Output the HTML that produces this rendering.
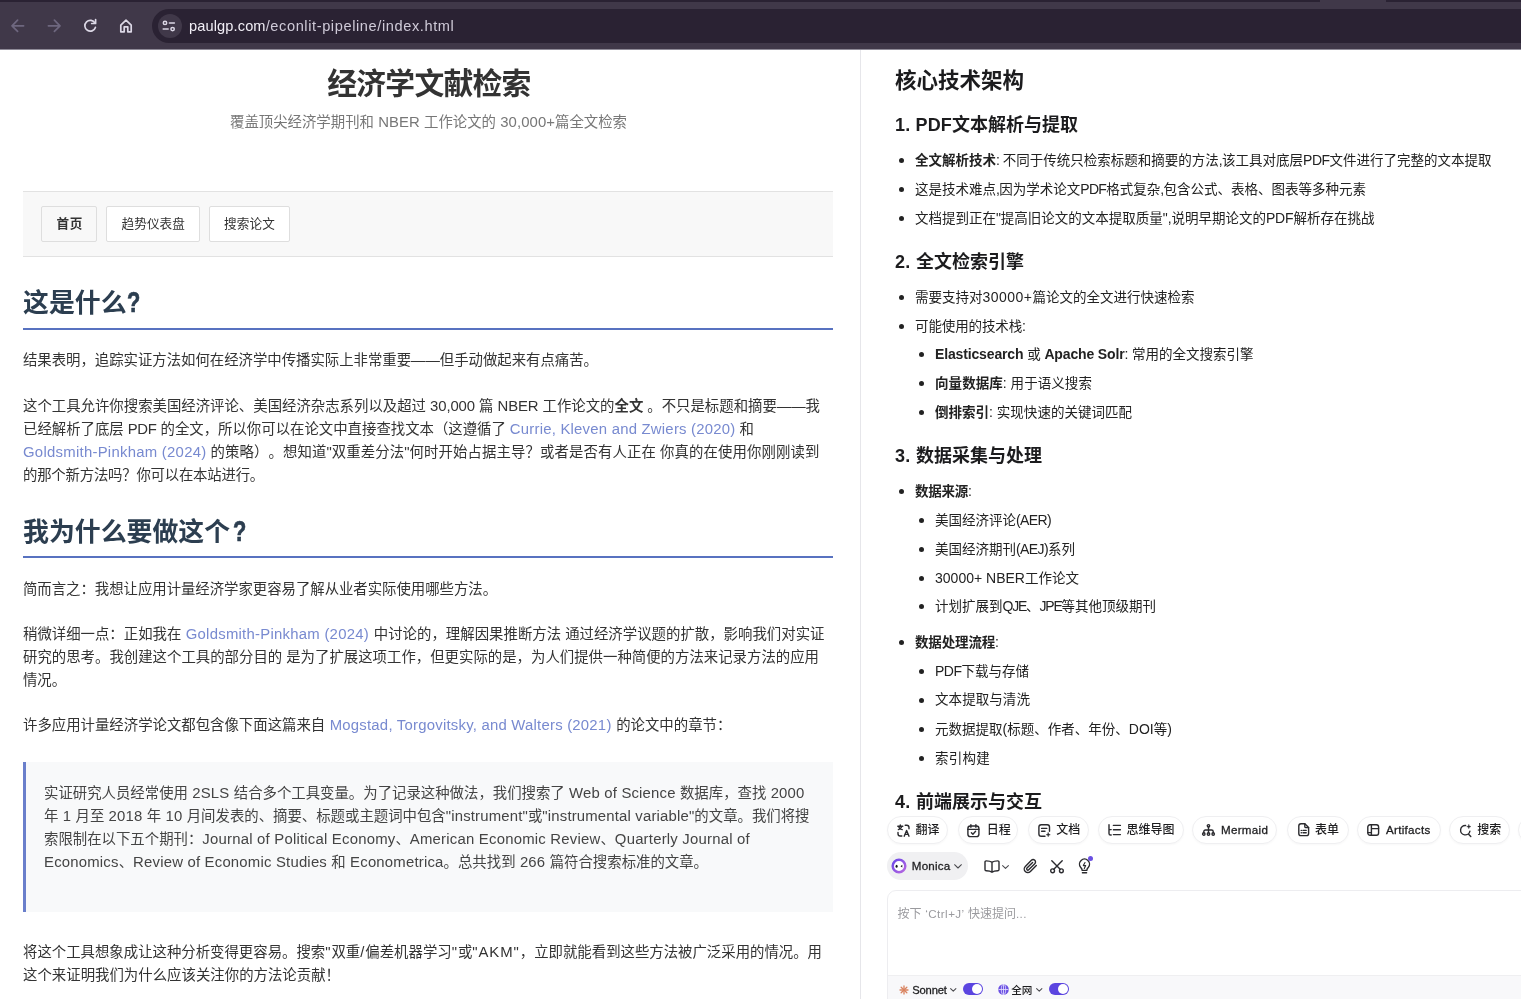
<!DOCTYPE html>
<html lang="zh-CN">
<head>
<meta charset="utf-8">
<title>经济学文献检索</title>
<style>
*{box-sizing:border-box;margin:0;padding:0}
html,body{width:1521px;height:999px;overflow:hidden;background:#fff}
body{position:relative;font-family:"Liberation Sans","Noto Sans CJK SC",sans-serif;text-spacing-trim:space-all;-webkit-font-smoothing:antialiased}
#root{position:absolute;left:0;top:0;width:1521px;height:999px;overflow:hidden;will-change:transform}
.abs{position:absolute}
/* browser chrome */
#chrome{position:absolute;left:0;top:0;width:1521px;height:50px;background:#403849;border-bottom:1px solid #8f8b98}
#tabstrip{position:absolute;left:0;top:0;width:1521px;height:2px;background:#2a2233}
#tabact{position:absolute;left:1320px;top:0;width:66px;height:3px;background:#403849;border-radius:0}
#urlbar{position:absolute;left:152px;top:9px;width:1400px;height:34px;border-radius:17px;background:#2a2233}
#urlic{position:absolute;left:158px;top:14px;width:24px;height:24px;border-radius:12px;background:#403849}
.url{position:absolute;left:189px;top:14.5px;height:22px;line-height:22px;font-size:14.6px;color:#f1eef6;white-space:nowrap;letter-spacing:.12px}
.url i{font-style:normal;color:#cfcad8;letter-spacing:.6px}
/* page */
#split{position:absolute;left:860px;top:50px;width:1px;height:949px;background:#e6e6ea}
#nav{position:absolute;left:23px;top:191px;width:810px;height:66px;background:#f8f8f8;border-top:1px solid #e2e2e2;border-bottom:1px solid #e2e2e2}
.btn{position:absolute;top:206px;height:36px;border:1px solid #dedede;background:#fff;border-radius:2px}
.hr{position:absolute;left:23px;width:810px;height:2px;background:#5872c0}
#bq{position:absolute;left:23px;top:762px;width:810px;height:150px;background:#f8f9fa;border-left:3px solid #6a7fcb}
.ln{position:absolute;white-space:pre;height:24px;line-height:24px;margin-top:-12px;font-size:14.4px;color:#333;--ls:0px}
.ln .l{letter-spacing:var(--ls)}
.ln a{color:#788ad0}
.ln b{font-weight:700}
.title{font-size:29.8px;font-weight:700;height:40px;line-height:40px;margin-top:-20px;color:#333}
.sub{color:#777}
.nb{font-size:12.6px;color:#333}
.nb.b{font-weight:700}
.h2{font-size:25.9px;font-weight:700;height:36px;line-height:36px;margin-top:-18px;color:#2c3e50}
.qm{transform:scaleX(.75);transform-origin:0 50%;font-size:29px;-webkit-text-stroke:.7px #2c3e50;margin-top:-18.2px}
.q{color:#444}
.r{font-size:13.5px;color:#222;margin-top:-12px}
.r .l{font-size:14px}
.p .l,.sub .l{font-size:14.9px}
.rh1{font-size:21.5px;font-weight:700;color:#1c1c1e;height:32px;line-height:32px;margin-top:-15px}
.rh3{font-size:18px;font-weight:700;color:#1c1c1e;height:28px;line-height:28px;margin-top:-13px}
.dot{position:absolute;width:5px;height:5px;border-radius:50%;background:#222;margin:-2.5px 0 0 -2.5px}
/* chips */
.chip{position:absolute;top:816px;height:28px;border:1px solid #efeff1;border-radius:14px;background:#fff;box-shadow:0 1px 2px rgba(0,0,0,.03)}
.ct{position:absolute;white-space:nowrap;font-size:12px;line-height:20px;height:20px;margin-top:-10px;color:#1e1e20;font-weight:500}
.ct .l{font-size:11.6px;-webkit-text-stroke:.3px #1e1e20}
.sm{font-size:10.6px}
.sm .l{font-size:11.2px}
.ph{color:#9a9a9e;font-weight:400}
.ct.ph .l{-webkit-text-stroke:0}

svg{position:absolute;overflow:visible}
.ic{fill:none;stroke:#2a2a2e;stroke-width:1.4;stroke-linecap:round;stroke-linejoin:round}
.ic.th{stroke:#4a4a4e;stroke-width:1.05}
#monica{position:absolute;left:887px;top:852px;width:81px;height:28px;border-radius:14px;background:#f0f0f2}
#inp{position:absolute;left:887px;top:890px;width:700px;height:140px;border:1px solid #ededf0;border-radius:9px;background:#fff;overflow:hidden}
#inpbar{position:absolute;left:0;top:84px;width:700px;height:60px;background:#f8f8fa;border-top:1px solid #efeff1}
.tog{position:absolute;top:983px;width:20px;height:12px;border-radius:6px;background:#5b45e0}
.tog:after{content:"";position:absolute;right:1px;top:1px;width:10px;height:10px;border-radius:5px;background:#fff}
</style>
</head>
<body>
<div id="root">
<div id="chrome">
  <div id="tabstrip"></div><div id="tabact"></div>
  <div id="urlbar"></div><div id="urlic"></div>
  <div class="url">paulgp.com<i>/econlit-pipeline/index.html</i></div>
  <svg style="left:0;top:0" width="200" height="49" viewBox="0 0 200 49">
<g fill="none" stroke="#6e677f" stroke-width="1.7" stroke-linecap="round" stroke-linejoin="round">
<path d="M23.6 25.8H12.2M17.6 20.2L12 25.8l5.6 5.6"/>
<path d="M48.4 25.8h11.4M54.4 20.2l5.6 5.6-5.6 5.6"/>
</g>
<g fill="none" stroke="#dcd8e6" stroke-width="1.7" stroke-linecap="round" stroke-linejoin="round">
<path d="M95 23.2A5.4 5.4 0 1 0 95.4 27.4"/>
<path d="M95.6 19.6v3.9h-3.9" />
<path d="M120.8 25.2L126 20.2l5.2 5v6.6h-3.4v-5h-3.6v5h-3.4z"/>
</g>
<g fill="none" stroke="#dcd8e6" stroke-width="1.5" stroke-linecap="round">
<circle cx="165" cy="22.9" r="1.7"/><path d="M169.4 22.9h5"/>
<circle cx="172.6" cy="29.1" r="1.7"/><path d="M163.2 29.1h5"/>
</g></svg>
</div>
<div id="split"></div>
<div id="nav"></div>
<div class="btn" style="left:41px;width:56px;background:#f8f8f8"></div>
<div class="btn" style="left:106px;width:94px"></div>
<div class="btn" style="left:209px;width:81px"></div>
<div class="hr" style="top:328px"></div>
<div class="hr" style="top:556px"></div>
<div id="bq"></div>
<div class="dot" style="left:901.7px;top:160.8px"></div>
<div class="dot" style="left:901.7px;top:189.8px"></div>
<div class="dot" style="left:901.7px;top:218.8px"></div>
<div class="dot" style="left:901.7px;top:297.8px"></div>
<div class="dot" style="left:901.7px;top:326.8px"></div>
<div class="dot" style="left:901.7px;top:491.8px"></div>
<div class="dot" style="left:901.7px;top:642.8px"></div>
<div class="dot" style="left:921.8px;top:354.8px"></div>
<div class="dot" style="left:921.8px;top:383.8px"></div>
<div class="dot" style="left:921.8px;top:412.8px"></div>
<div class="dot" style="left:921.8px;top:520.8px"></div>
<div class="dot" style="left:921.8px;top:549.8px"></div>
<div class="dot" style="left:921.8px;top:578.3px"></div>
<div class="dot" style="left:921.8px;top:606.8px"></div>
<div class="dot" style="left:921.8px;top:671.8px"></div>
<div class="dot" style="left:921.8px;top:700.8px"></div>
<div class="dot" style="left:921.8px;top:729.8px"></div>
<div class="dot" style="left:921.8px;top:758.3px"></div>
<div class="chip" style="left:886.5px;width:61.5px"></div>
<div class="chip" style="left:957.5px;width:60.5px"></div>
<div class="chip" style="left:1027.5px;width:61.5px"></div>
<div class="chip" style="left:1098px;width:85.5px"></div>
<div class="chip" style="left:1191.5px;width:85.5px"></div>
<div class="chip" style="left:1287px;width:61.5px"></div>
<div class="chip" style="left:1356.5px;width:84px"></div>
<div class="chip" style="left:1448.5px;width:61.5px"></div>
<div class="chip" style="left:1518px;width:82px"></div>
<svg class="ic" style="left:896.5px;top:823.5px" width="13" height="13" viewBox="0 0 13 13"><path d="M0.8 2.2h5M3.3 0.9v1.3M1.4 5.6c2-0.6 3.2-1.8 3.6-3.4M1.8 3c0.6 1.3 1.8 2.2 3.4 2.6"/><path d="M7.2 12.2l2.4-5.8 2.4 5.8M8 10.4h3.2"/><path d="M8.2 1.2h1.6a2.2 2.2 0 0 1 2.2 2.2v1.4"/><path d="M4.8 12h-1.6a2.2 2.2 0 0 1-2.2-2.2v-1.4"/></svg>
<svg class="ic" style="left:967px;top:823.5px" width="13" height="13.5" viewBox="0 0 13 13.5"><rect x="0.9" y="2" width="11" height="10.6" rx="2.4"/><path d="M0.9 5.4h11M3.9 0.7v2.6M8.9 0.7v2.6M4.4 8.7l1.5 1.5 2.7-2.9"/></svg>
<svg class="ic" style="left:1038px;top:823.5px" width="13" height="13" viewBox="0 0 13 13"><path d="M7 12.2H3.2A2.3 2.3 0 0 1 0.9 9.9V3.1A2.3 2.3 0 0 1 3.2 0.8h6A2.3 2.3 0 0 1 11.5 3.1V7.2"/><path d="M3.6 4.4h5.2M3.6 7.2h3.4"/><path d="M10.2 8.6l0.6 1.5 1.5 0.6-1.5 0.6-0.6 1.5-0.6-1.5-1.5-0.6 1.5-0.6z" fill="#2a2a2e" stroke-width="0.4"/></svg>
<svg class="ic" style="left:1108px;top:824px" width="13" height="12" viewBox="0 0 13 12"><path d="M1 0.8v8.6a1.6 1.6 0 0 0 1.6 1.6h0.6M1 5.6h2.2"/><path d="M5.4 1.4h7M5.4 5.8h7M5.4 10.6h7"/></svg>
<svg class="ic" style="left:1201.5px;top:824px" width="13" height="12" viewBox="0 0 13 12"><circle cx="6.5" cy="1.8" r="1.2"/><circle cx="1.8" cy="10" r="1.2"/><circle cx="6.5" cy="10" r="1.2"/><circle cx="11.2" cy="10" r="1.2"/><path d="M6.5 3v5.8M1.8 8.8V7.6a1.6 1.6 0 0 1 1.6-1.6h6.2a1.6 1.6 0 0 1 1.6 1.6v1.2"/></svg>
<svg class="ic" style="left:1297.5px;top:823px" width="11.5" height="13.5" viewBox="0 0 11.5 13.5"><path d="M6.8 0.8H3A2.2 2.2 0 0 0 0.8 3v7.4A2.2 2.2 0 0 0 3 12.6h5.4a2.2 2.2 0 0 0 2.2-2.2V4.6z"/><path d="M6.8 0.8v2.6a1.2 1.2 0 0 0 1.2 1.2h2.6"/><path d="M3.2 7.4h0.2M5 7.4h3.2M3.2 9.8h0.2M5 9.8h3.2"/></svg>
<svg class="ic" style="left:1367px;top:824px" width="12.5" height="12" viewBox="0 0 12.5 12"><rect x="0.8" y="0.8" width="10.8" height="10.4" rx="2.2"/><path d="M4.4 0.8v10.4M4.4 4.6h7.2M0.8 8.6h3.6"/></svg>
<svg class="ic" style="left:1458.5px;top:823.5px" width="13" height="13" viewBox="0 0 13 13"><path d="M6.6 1.5a4.7 4.7 0 1 0 4.3 5.6M9.6 10.2l2.2 2.2"/><path d="M9.8 0.4l0.6 1.6 1.6 0.6-1.6 0.6-0.6 1.6-0.6-1.6-1.6-0.6 1.6-0.6z" fill="#2a2a2e" stroke-width="0.3"/></svg>
<div id="monica"></div>
<svg style="left:890px;top:857px" width="18" height="18" viewBox="0 0 18 18"><defs><linearGradient id="mg" x1="0" y1="0" x2="1" y2="1"><stop offset="0" stop-color="#6a46e8"/><stop offset="1" stop-color="#b868e0"/></linearGradient></defs><circle cx="9" cy="9" r="6.3" fill="#fff" stroke="url(#mg)" stroke-width="2.5"/><ellipse cx="6.6" cy="9.2" rx="1.05" ry="1.5" fill="#17171a"/><path d="M12.3 7.8L10.5 9.2l1.8 1.4z" fill="#17171a"/></svg>
<svg class="ic th" style="left:953.5px;top:864px" width="8" height="5" viewBox="0 0 8 5"><path d="M0.6 0.7l3.4 3.3 3.4-3.3"/></svg>
<svg class="ic" style="left:983.5px;top:859.5px" width="16" height="13" viewBox="0 0 16 13"><path d="M8 2.3C6.6 1.2 4.4 0.9 2.2 0.9a1.2 1.2 0 0 0-1.2 1.2v7.4a1.2 1.2 0 0 0 1.2 1.2c2.2 0 4.4 0.3 5.8 1.5 1.400-1.2 3.600-1.500 5.800-1.500a1.200 1.200 0 0 0 1.200-1.200V2.100a1.200 1.200 0 0 0-1.200-1.200c-2.200 0-4.400 0.300-5.800 1.400zM8 2.300v9.900"/></svg>
<svg class="ic th" style="left:1002px;top:865px" width="7" height="4.5" viewBox="0 0 7 4.5"><path d="M0.6 0.6l2.9 2.8 2.900-2.800"/></svg>
<svg class="ic" style="left:1022.5px;top:858.5px" width="15" height="15" viewBox="0 0 15 15"><path d="M13.300 6.600l-5.900 5.900a3.600 3.600 0 0 1-5.100-5.100l6.100-6.100a2.400 2.400 0 0 1 3.400 3.400l-6.100 6.100a1.200 1.200 0 0 1-1.700-1.700l5.600-5.600"/></svg>
<svg class="ic" style="left:1050px;top:859.5px" width="14" height="13.5" viewBox="0 0 14 13.5"><circle cx="2.6" cy="10.800" r="1.900"/><circle cx="11.400" cy="10.800" r="1.900"/><path d="M1.800 0.700l8.400 8.600M12.200 0.700l-8.400 8.600"/></svg>
<svg class="ic" style="left:1077.5px;top:859px" width="13" height="15" viewBox="0 0 13 15"><path d="M4.200 11.400c0-1.400-0.600-2.200-1.600-3.200a5 5 0 1 1 7.800 0c-1 1-1.600 1.800-1.600 3.200zM4.400 13.800h4.200"/><path d="M7 3.600l-1.700 3h2.400l-1.400 2.800" stroke-width="1.100"/></svg>
<div class="abs" style="left:1088px;top:856px;width:5px;height:5px;border-radius:50%;background:#6a4fe2"></div>
<div id="inp"><div id="inpbar"></div></div>
<svg style="left:899px;top:985px" width="10" height="10" viewBox="-5 -5 10 10"><g stroke="#d9825f" stroke-width="1.300" stroke-linecap="round"><path d="M0 0L4.00 0.00"/><path d="M0 0L2.83 2.83"/><path d="M0 0L0.00 4.00"/><path d="M0 0L-2.83 2.83"/><path d="M0 0L-4.00 0.00"/><path d="M0 0L-2.83 -2.83"/><path d="M0 0L-0.00 -4.00"/><path d="M0 0L2.83 -2.83"/></g></svg>
<svg class="ic th" style="left:949.5px;top:988.3px" width="6.5" height="4.2" viewBox="0 0 6.5 4.2"><path d="M0.600 0.600l2.650 2.600 2.650-2.600"/></svg>
<div class="tog" style="left:963px"></div>
<svg style="left:998px;top:984px" width="11" height="11" viewBox="0 0 11 11"><circle cx="5.500" cy="5.500" r="5.300" fill="#6a4fe2"/><g fill="none" stroke="#e9e4ff" stroke-width="0.800"><ellipse cx="5.500" cy="5.500" rx="2.200" ry="5"/><path d="M0.500 5.500h10M5.500 0.500v10"/></g></svg>
<svg class="ic th" style="left:1036px;top:988.3px" width="6.5" height="4.2" viewBox="0 0 6.5 4.2"><path d="M0.600 0.600l2.650 2.600 2.650-2.600"/></svg>
<div class="tog" style="left:1049px"></div>
<div class="ln title" id="L0" style="left:327.3px;top:83.6px;letter-spacing:-0.768px;">经济学文献检索</div>
<div class="ln sub" id="L1" style="left:230px;top:122px;--ls:0.078px;">覆盖顶尖经济学期刊和<span class="l"> NBER </span>工作论文的<span class="l"> 30,000+</span>篇全文检索</div>
<div class="ln nb b" id="L2" style="left:56.5px;top:223.8px;letter-spacing:0.656px;">首页</div>
<div class="ln nb" id="L3" style="left:121.5px;top:223.8px;letter-spacing:0.106px;">趋势仪表盘</div>
<div class="ln nb" id="L4" style="left:224px;top:223.8px;letter-spacing:0.156px;">搜索论文</div>
<div class="ln h2" id="L5" style="left:23px;top:302.5px;--ls:0.000px;">这是什么</div>
<div class="ln h2 qm" id="L6" style="left:126.6px;top:302.5px;--ls:0.000px;"><span class="l">?</span></div>
<div class="ln p" id="L7" style="left:23px;top:360px;letter-spacing:-0.016px;">结果表明，追踪实证方法如何在经济学中传播实际上非常重要——但手动做起来有点痛苦。</div>
<div class="ln p" id="L8" style="left:23px;top:405.5px;--ls:-0.092px;">这个工具允许你搜索美国经济评论、美国经济杂志系列以及超过<span class="l"> 30,000 </span>篇<span class="l"> NBER </span>工作论文的<b>全文</b> 。不只是标题和摘要——我</div>
<div class="ln p" id="L9" style="left:23px;top:428.5px;--ls:-0.261px;">已经解析了底层<span class="l"> PDF </span>的全文，所以你可以在论文中直接查找文本（这遵循了</div>
<div class="ln p" id="L10" style="left:509.8px;top:428.5px;--ls:0.225px;"><a><span class="l">Currie, Kleven and Zwiers (2020)</span></a></div>
<div class="ln p" id="L11" style="left:739.5px;top:428.5px;--ls:0.000px;">和</div>
<div class="ln p" id="L12" style="left:23px;top:451.5px;--ls:0.266px;"><a><span class="l">Goldsmith-Pinkham (2024)</span></a></div>
<div class="ln p" id="L13" style="left:210.5px;top:451.5px;letter-spacing:0.103px;">的策略）。想知道<span class="l">"</span>双重差分法<span class="l">"</span>何时开始占据主导？或者是否有人正在 你真的在使用你刚刚读到</div>
<div class="ln p" id="L14" style="left:23px;top:474.5px;letter-spacing:-0.215px;">的那个新方法吗？你可以在本站进行。</div>
<div class="ln h2" id="L15" style="left:23px;top:531.5px;--ls:0.000px;">我为什么要做这个</div>
<div class="ln h2 qm" id="L16" style="left:232.8px;top:531.5px;--ls:0.000px;"><span class="l">?</span></div>
<div class="ln p" id="L17" style="left:23px;top:588.5px;letter-spacing:-0.027px;">简而言之：我想让应用计量经济学家更容易了解从业者实际使用哪些方法。</div>
<div class="ln p" id="L18" style="left:23px;top:633.5px;--ls:0.000px;">稍微详细一点：正如我在</div>
<div class="ln p" id="L19" style="left:185.7px;top:633.5px;--ls:0.258px;"><a><span class="l">Goldsmith-Pinkham (2024)</span></a></div>
<div class="ln p" id="L20" style="left:373.8px;top:633.5px;letter-spacing:0.018px;">中讨论的，理解因果推断方法 通过经济学议题的扩散，影响我们对实证</div>
<div class="ln p" id="L21" style="left:23px;top:656.5px;letter-spacing:0.009px;">研究的思考。我创建这个工具的部分目的 是为了扩展这项工作，但更实际的是，为人们提供一种简便的方法来记录方法的应用</div>
<div class="ln p" id="L22" style="left:23px;top:679.5px;letter-spacing:-0.062px;">情况。</div>
<div class="ln p" id="L23" style="left:23px;top:724.5px;--ls:0.000px;">许多应用计量经济学论文都包含像下面这篇来自</div>
<div class="ln p" id="L24" style="left:329.7px;top:724.5px;--ls:0.226px;"><a><span class="l">Mogstad, Torgovitsky, and Walters (2021)</span></a></div>
<div class="ln p" id="L25" style="left:616.2px;top:724.5px;--ls:0.000px;">的论文中的章节：</div>
<div class="ln p q" id="L26" style="left:44px;top:792.5px;--ls:0.183px;">实证研究人员经常使用<span class="l"> 2SLS </span>结合多个工具变量。为了记录这种做法，我们搜索了<span class="l"> Web of Science </span>数据库，查找<span class="l"> 2000</span></div>
<div class="ln p q" id="L27" style="left:44px;top:815.5px;--ls:0.175px;">年<span class="l"> 1 </span>月至<span class="l"> 2018 </span>年<span class="l"> 10 </span>月间发表的、摘要、标题或主题词中包含<span class="l">"instrument"</span>或<span class="l">"instrumental variable"</span>的文章。我们将搜</div>
<div class="ln p q" id="L28" style="left:44px;top:838.5px;--ls:0.217px;">索限制在以下五个期刊：<span class="l">Journal of Political Economy</span>、<span class="l">American Economic Review</span>、<span class="l">Quarterly Journal of</span></div>
<div class="ln p q" id="L29" style="left:44px;top:861.5px;--ls:0.202px;"><span class="l">Economics</span>、<span class="l">Review of Economic Studies </span>和<span class="l"> Econometrica</span>。总共找到<span class="l"> 266 </span>篇符合搜索标准的文章。</div>
<div class="ln p" id="L30" style="left:23px;top:951.5px;--ls:0.928px;">将这个工具想象成让这种分析变得更容易。搜索<span class="l">"</span>双重<span class="l">/</span>偏差机器学习<span class="l">"</span>或<span class="l">"AKM"</span>，立即就能看到这些方法被广泛采用的情况。用</div>
<div class="ln p" id="L31" style="left:23px;top:974.5px;letter-spacing:0.018px;">这个来证明我们为什么应该关注你的方法论贡献！</div>
<div class="ln rh1" id="L32" style="left:895px;top:80px;letter-spacing:-0.003px;">核心技术架构</div>
<div class="ln rh3" id="L33" style="left:895px;top:124px;--ls:0.164px;"><span class="l">1. PDF</span>文本解析与提取</div>
<div class="ln r" id="L34" style="left:915px;top:160px;--ls:-0.531px;"><b>全文解析技术</b><span class="l">: </span>不同于传统只检索标题和摘要的方法<span class="l">,</span>该工具对底层<span class="l">PDF</span>文件进行了完整的文本提取</div>
<div class="ln r" id="L35" style="left:915px;top:189px;--ls:-0.659px;">这是技术难点<span class="l">,</span>因为学术论文<span class="l">PDF</span>格式复杂<span class="l">,</span>包含公式、表格、图表等多种元素</div>
<div class="ln r" id="L36" style="left:915px;top:218px;--ls:-0.141px;">文档提到正在<span class="l">"</span>提高旧论文的文本提取质量<span class="l">",</span>说明早期论文的<span class="l">PDF</span>解析存在挑战</div>
<div class="ln rh3" id="L37" style="left:895px;top:261px;--ls:0.328px;"><span class="l">2. </span>全文检索引擎</div>
<div class="ln r" id="L38" style="left:915px;top:297px;--ls:0.482px;">需要支持对<span class="l">30000+</span>篇论文的全文进行快速检索</div>
<div class="ln r" id="L39" style="left:915px;top:326px;letter-spacing:-0.113px;">可能使用的技术栈<span class="l">:</span></div>
<div class="ln r" id="L40" style="left:935px;top:354px;--ls:-0.146px;"><b><span class="l">Elasticsearch</span></b> 或 <b><span class="l">Apache Solr</span></b><span class="l">: </span>常用的全文搜索引擎</div>
<div class="ln r" id="L41" style="left:935px;top:383px;letter-spacing:0.065px;"><b>向量数据库</b><span class="l">: </span>用于语义搜索</div>
<div class="ln r" id="L42" style="left:935px;top:412px;letter-spacing:0.015px;"><b>倒排索引</b><span class="l">: </span>实现快速的关键词匹配</div>
<div class="ln rh3" id="L43" style="left:895px;top:455px;--ls:0.328px;"><span class="l">3. </span>数据采集与处理</div>
<div class="ln r" id="L44" style="left:915px;top:491px;letter-spacing:-0.225px;"><b>数据来源</b><span class="l">:</span></div>
<div class="ln r" id="L45" style="left:935px;top:520px;--ls:-0.625px;">美国经济评论<span class="l">(AER)</span></div>
<div class="ln r" id="L46" style="left:935px;top:549px;--ls:-0.603px;">美国经济期刊<span class="l">(AEJ)</span>系列</div>
<div class="ln r" id="L47" style="left:935px;top:577.5px;--ls:0.009px;"><span class="l">30000+ NBER</span>工作论文</div>
<div class="ln r" id="L48" style="left:935px;top:606px;--ls:-1.237px;">计划扩展到<span class="l">QJE</span>、<span class="l">JPE</span>等其他顶级期刊</div>
<div class="ln r" id="L49" style="left:915px;top:642px;letter-spacing:-0.150px;"><b>数据处理流程</b><span class="l">:</span></div>
<div class="ln r" id="L50" style="left:935px;top:671px;--ls:-0.500px;"><span class="l">PDF</span>下载与存储</div>
<div class="ln r" id="L51" style="left:935px;top:700px;letter-spacing:0.071px;">文本提取与清洗</div>
<div class="ln r" id="L52" style="left:935px;top:729px;--ls:0.053px;">元数据提取<span class="l">(</span>标题、作者、年份、<span class="l">DOI</span>等<span class="l">)</span></div>
<div class="ln r" id="L53" style="left:935px;top:758.6px;letter-spacing:0.250px;">索引构建</div>
<div class="ln rh3" id="L54" style="left:895px;top:801px;--ls:0.328px;"><span class="l">4. </span>前端展示与交互</div>
<div class="ln ct" id="L55" style="left:915.5px;top:830px;--ls:0.000px;">翻译</div>
<div class="ln ct" id="L56" style="left:986.8px;top:830px;--ls:0.000px;">日程</div>
<div class="ln ct" id="L57" style="left:1056.3px;top:830px;--ls:0.000px;">文档</div>
<div class="ln ct" id="L58" style="left:1126.5px;top:830px;--ls:0.000px;">思维导图</div>
<div class="ln ct" id="L59" style="left:1221px;top:830px;--ls:0.300px;"><span class="l">Mermaid</span></div>
<div class="ln ct" id="L60" style="left:1315px;top:830px;--ls:0.000px;">表单</div>
<div class="ln ct" id="L61" style="left:1386px;top:830px;--ls:0.290px;"><span class="l">Artifacts</span></div>
<div class="ln ct" id="L62" style="left:1477.2px;top:830px;--ls:0.000px;">搜索</div>
<div class="ln ct" id="L63" style="left:911.8px;top:866.3px;--ls:0.187px;"><span class="l">Monica</span></div>
<div class="ln ct ph" id="L64" style="left:897.5px;top:913.6px;--ls:0.464px;">按下<span class="l"> ‘Ctrl+J’ </span>快速提问<span class="l">...</span></div>
<div class="ln ct sm" id="L65" style="left:912.2px;top:990.2px;--ls:-0.141px;"><span class="l">Sonnet</span></div>
<div class="ln ct sm" id="L66" style="left:1011.2px;top:990.2px;--ls:0.000px;">全网</div>
</div>
</body>
</html>
